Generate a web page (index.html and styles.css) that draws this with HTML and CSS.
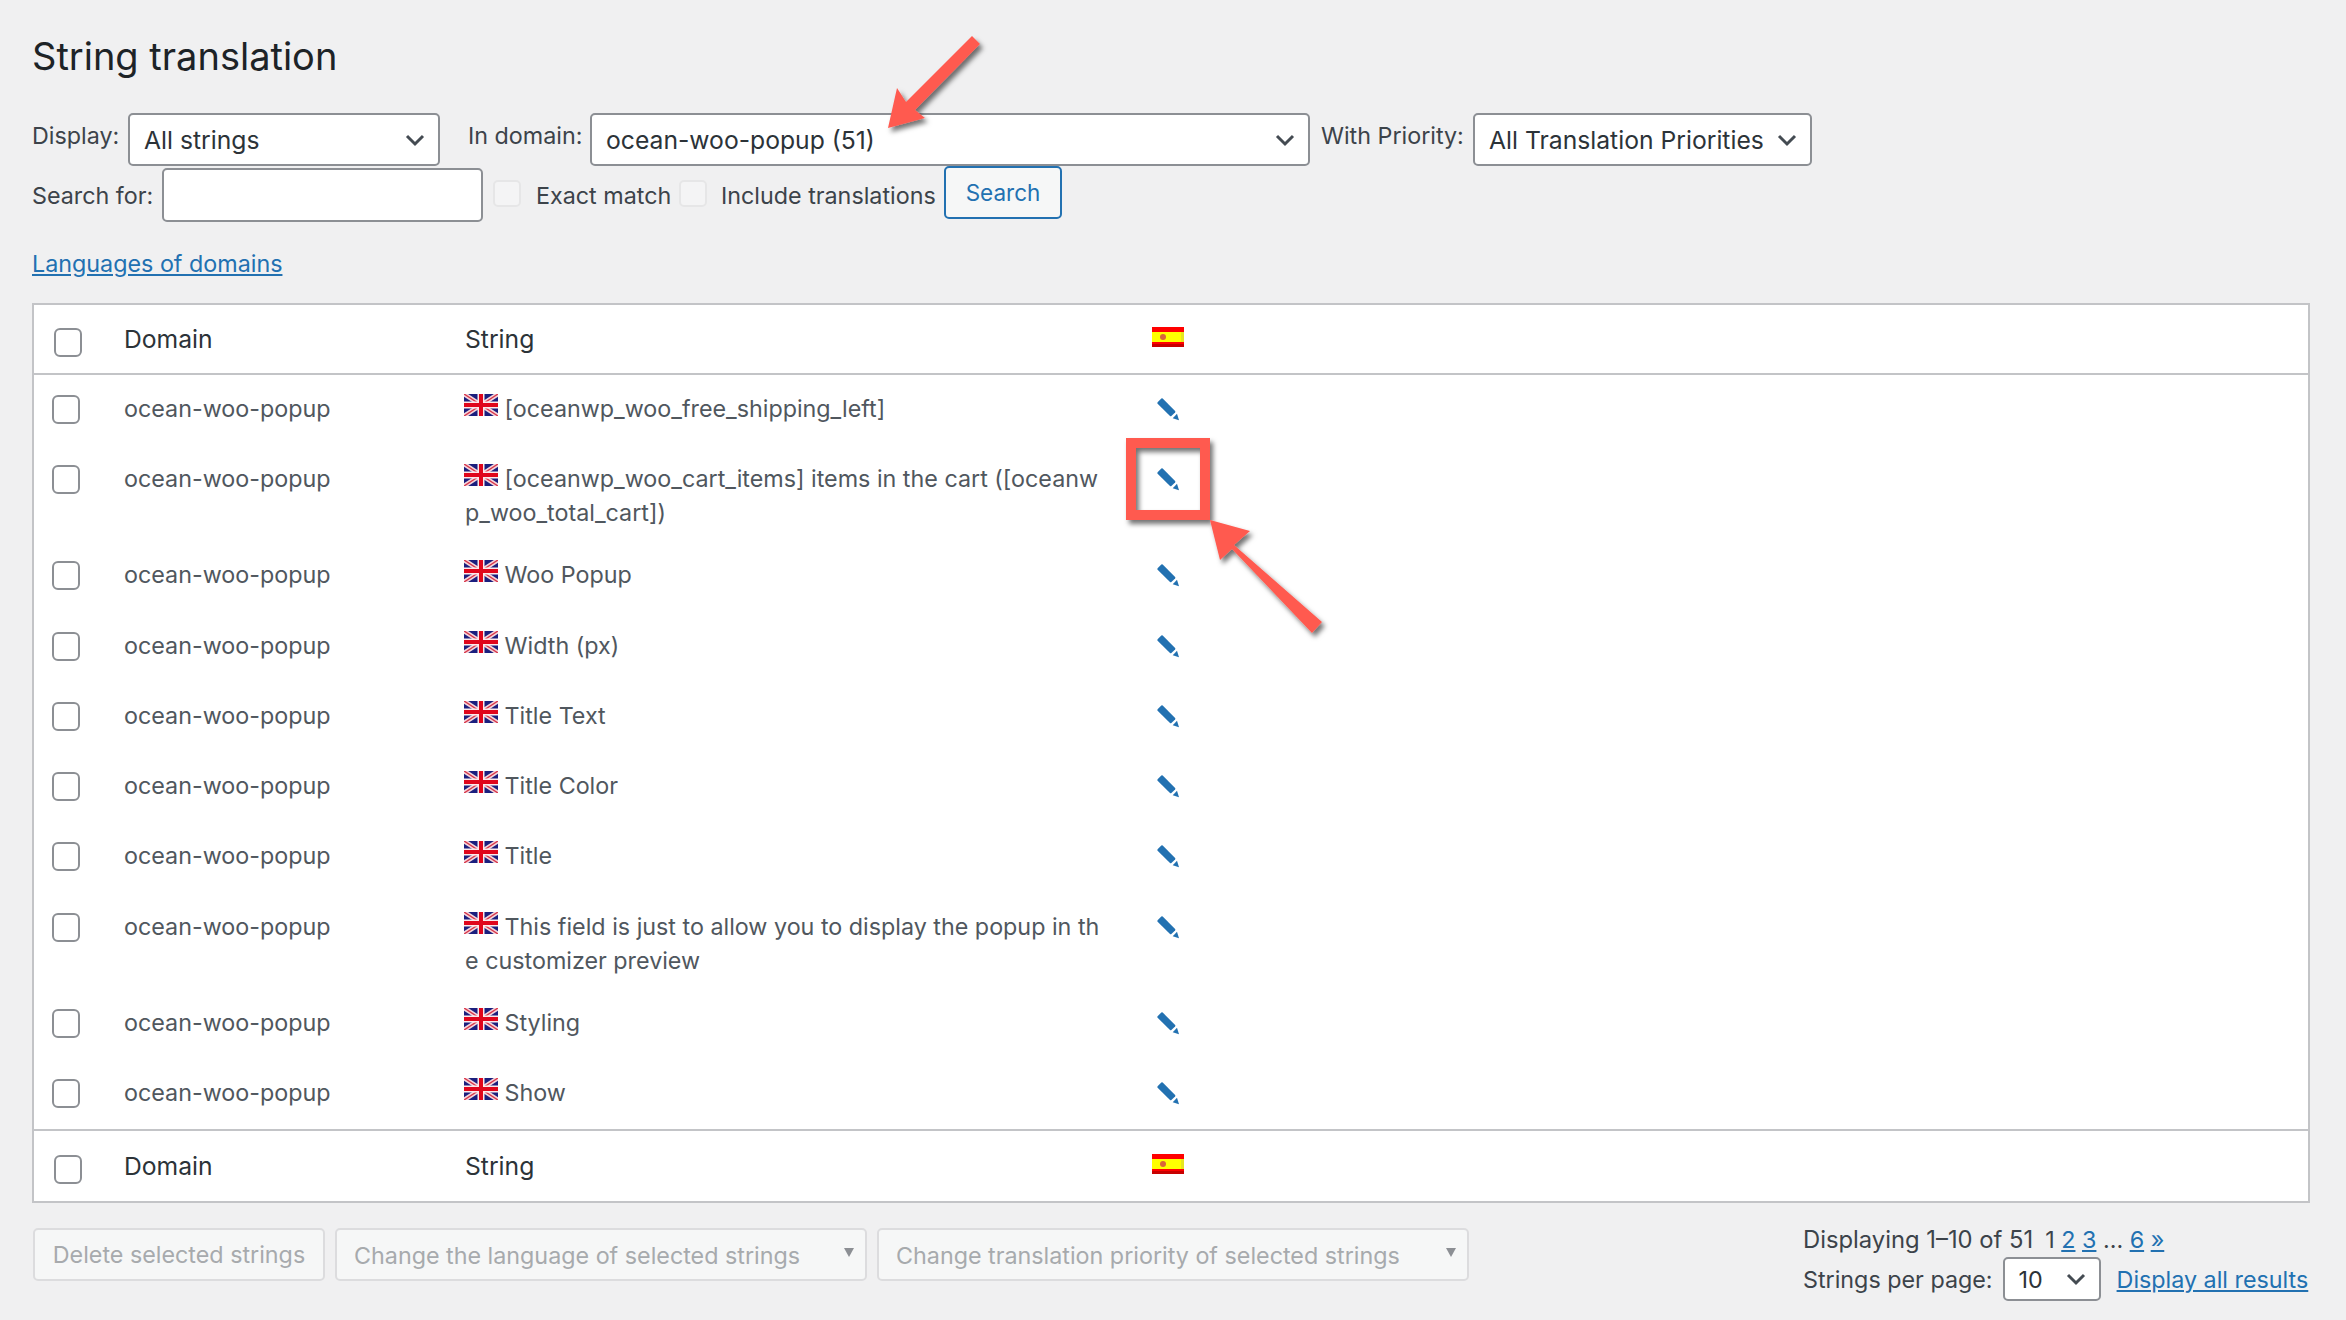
FILE: index.html
```html
<!DOCTYPE html>
<html lang="en">
<head>
    <meta charset="UTF-8">
    <meta name="viewport" content="width=device-width, initial-scale=1.0">
    <title>String translation</title>
    <link rel="stylesheet" href="styles.css">
</head>
<body>
    <svg class="defs" width="0" height="0">
        <symbol id="flag-gb" viewBox="0 0 34 22">
            <rect width="34" height="22" fill="#1b1f7e"/>
            <path d="M0 0L34 22M34 0L0 22" stroke="#f4d6dc" stroke-width="4.5"/>
            <path d="M0 0L34 22M34 0L0 22" stroke="#d8364a" stroke-width="1.4"/>
            <path d="M17 0V22M0 11H34" stroke="#fbe9ec" stroke-width="7"/>
            <path d="M17 0V22M0 11H34" stroke="#e0061c" stroke-width="4"/>
        </symbol>
        <symbol id="flag-es" viewBox="0 0 32 20">
            <rect width="32" height="20" fill="#f00"/>
            <rect y="5" width="32" height="10" fill="#ff0"/>
            <rect y="17" width="32" height="3" fill="#c80000"/>
            <rect x="29" y="5" width="3" height="10" fill="#e6e620"/>
            <circle cx="11" cy="10" r="3" fill="#d9653a"/>
        </symbol>
        <symbol id="pencil" viewBox="0 0 22 23">
            <path d="M4.3 0.6L0.6 4.3Q0 5 0.6 5.7L13 18.1Q13.7 18.6 14.4 18.1L18.1 14.4Q18.7 13.7 18.1 13L5.7 0.6Q5 0 4.3 0.6Z" fill="#2271b1"/>
            <path d="M20 15.7L22 22.3L15.7 20.3Z" fill="#2271b1"/>
        </symbol>
    </svg>

    <div id="main-container">
        <h1 class="page-title">String translation</h1>

        <form class="filters">
            <div class="filter-row">
                <label class="filter-label label-display">Display:</label>
                <select class="wp-select select-display"><option>All strings</option></select>
                <label class="filter-label label-domain">In domain:</label>
                <select class="wp-select select-domain"><option>ocean-woo-popup (51)</option></select>
                <label class="filter-label label-priority">With Priority:</label>
                <select class="wp-select select-priority"><option>All Translation Priorities</option></select>
            </div>
            <div class="filter-row search-row">
                <label class="filter-label label-search">Search for:</label>
                <input class="search-input" type="text">
                <span class="faint-check check-exact"></span>
                <label class="filter-label label-exact">Exact match</label>
                <span class="faint-check check-include"></span>
                <label class="filter-label label-include">Include translations</label>
                <button class="search-button" type="button">Search</button>
            </div>
        </form>

        <a class="wp-link domains-link" href="#">Languages of domains</a>

        <table class="strings-table">
            <colgroup>
                <col class="col-check"><col class="col-domain"><col class="col-string"><col>
            </colgroup>
            <thead>
                <tr>
                    <th class="check-cell"><input class="wp-check head-check" type="checkbox"></th>
                    <th>Domain</th>
                    <th>String</th>
                    <th class="flag-head"><svg class="flag-es"><use href="#flag-es"/></svg></th>
                </tr>
            </thead>
            <tbody>
                <tr>
                    <td class="check-cell"><input class="wp-check" type="checkbox"></td>
                    <td>ocean-woo-popup</td>
                    <td class="string-cell"><svg class="flag-gb"><use href="#flag-gb"/></svg> [oceanwp_woo_free_shipping_left]</td>
                    <td class="edit-cell"><svg class="pencil"><use href="#pencil"/></svg></td>
                </tr>
                <tr>
                    <td class="check-cell"><input class="wp-check" type="checkbox"></td>
                    <td>ocean-woo-popup</td>
                    <td class="string-cell"><svg class="flag-gb"><use href="#flag-gb"/></svg> [oceanwp_woo_cart_items] items in the cart ([oceanwp_woo_total_cart])</td>
                    <td class="edit-cell"><svg class="pencil"><use href="#pencil"/></svg></td>
                </tr>
                <tr>
                    <td class="check-cell"><input class="wp-check" type="checkbox"></td>
                    <td>ocean-woo-popup</td>
                    <td class="string-cell"><svg class="flag-gb"><use href="#flag-gb"/></svg> Woo Popup</td>
                    <td class="edit-cell"><svg class="pencil"><use href="#pencil"/></svg></td>
                </tr>
                <tr>
                    <td class="check-cell"><input class="wp-check" type="checkbox"></td>
                    <td>ocean-woo-popup</td>
                    <td class="string-cell"><svg class="flag-gb"><use href="#flag-gb"/></svg> Width (px)</td>
                    <td class="edit-cell"><svg class="pencil"><use href="#pencil"/></svg></td>
                </tr>
                <tr>
                    <td class="check-cell"><input class="wp-check" type="checkbox"></td>
                    <td>ocean-woo-popup</td>
                    <td class="string-cell"><svg class="flag-gb"><use href="#flag-gb"/></svg> Title Text</td>
                    <td class="edit-cell"><svg class="pencil"><use href="#pencil"/></svg></td>
                </tr>
                <tr>
                    <td class="check-cell"><input class="wp-check" type="checkbox"></td>
                    <td>ocean-woo-popup</td>
                    <td class="string-cell"><svg class="flag-gb"><use href="#flag-gb"/></svg> Title Color</td>
                    <td class="edit-cell"><svg class="pencil"><use href="#pencil"/></svg></td>
                </tr>
                <tr>
                    <td class="check-cell"><input class="wp-check" type="checkbox"></td>
                    <td>ocean-woo-popup</td>
                    <td class="string-cell"><svg class="flag-gb"><use href="#flag-gb"/></svg> Title</td>
                    <td class="edit-cell"><svg class="pencil"><use href="#pencil"/></svg></td>
                </tr>
                <tr>
                    <td class="check-cell"><input class="wp-check" type="checkbox"></td>
                    <td>ocean-woo-popup</td>
                    <td class="string-cell"><svg class="flag-gb"><use href="#flag-gb"/></svg> This field is just to allow you to display the popup in the customizer preview</td>
                    <td class="edit-cell"><svg class="pencil"><use href="#pencil"/></svg></td>
                </tr>
                <tr>
                    <td class="check-cell"><input class="wp-check" type="checkbox"></td>
                    <td>ocean-woo-popup</td>
                    <td class="string-cell"><svg class="flag-gb"><use href="#flag-gb"/></svg> Styling</td>
                    <td class="edit-cell"><svg class="pencil"><use href="#pencil"/></svg></td>
                </tr>
                <tr class="last-row">
                    <td class="check-cell"><input class="wp-check" type="checkbox"></td>
                    <td>ocean-woo-popup</td>
                    <td class="string-cell"><svg class="flag-gb"><use href="#flag-gb"/></svg> Show</td>
                    <td class="edit-cell"><svg class="pencil"><use href="#pencil"/></svg></td>
                </tr>
            </tbody>
            <tfoot>
                <tr>
                    <th class="check-cell"><input class="wp-check head-check" type="checkbox"></th>
                    <th>Domain</th>
                    <th>String</th>
                    <th class="flag-head"><svg class="flag-es"><use href="#flag-es"/></svg></th>
                </tr>
            </tfoot>
        </table>

        <div class="bottom-bar">
            <div class="bulk-actions">
                <button class="bulk-control bulk-delete" type="button" disabled>Delete selected strings</button>
                <div class="bulk-control bulk-language">Change the language of selected strings</div>
                <div class="bulk-control bulk-priority">Change translation priority of selected strings</div>
            </div>
            <div class="pager">
                <div class="pager-line">
                    <span class="pager-count">Displaying 1–10 of 51</span>
                    <span class="pager-pages">1 <a class="wp-link" href="#">2</a> <a class="wp-link" href="#">3</a> ... <a class="wp-link" href="#">6</a> <a class="wp-link" href="#">»</a></span>
                </div>
                <div class="pager-line per-page">
                    <label>Strings per page:</label>
                    <select class="wp-select select-perpage"><option>10</option></select>
                    <a class="wp-link" href="#">Display all results</a>
                </div>
            </div>
        </div>
    </div>

    <!-- annotations drawn over the screenshot -->
    <svg class="annotations" width="2346" height="1320" viewBox="0 0 2346 1320">
        <defs>
            <filter id="arrow-shadow" x="-20%" y="-20%" width="140%" height="140%">
                <feDropShadow dx="3" dy="4" stdDeviation="2.5" flood-color="#000" flood-opacity="0.55"/>
            </filter>
        </defs>
        <g filter="url(#arrow-shadow)" fill="#ff5a50">
            <path d="M1126 438H1210V520H1126ZM1136 448V510H1200V448Z" fill-rule="evenodd"/>
            <path d="M1210 520L1250 531L1234 545L1322 622L1312 633L1232 549L1220 560Z"/>
            <path d="M888 128L897 88L906 102L972 36L980 44L915 110L925 118Z"/>
        </g>
    </svg>
</body>
</html>
```

FILE: styles.css
```css
/* page */
* {
    box-sizing: border-box;
}
html, body {
    margin: 0;
    height: 100%;
    overflow: hidden;
}
body {
    background: #f0f0f1;
    color: #3c434a;
    font-family: Inter, "Liberation Sans", sans-serif;
    font-size: 23.3px;
    position: relative;
}
.defs {
    position: absolute;
}
#main-container {
    padding: 32px 36px 0 32px;
}
.page-title {
    margin: 0;
    height: 81px;
    font-size: 38px;
    line-height: 48px;
    font-weight: 400;
    color: #1d2327;
}

/* filters */
.filter-row {
    display: flex;
    align-items: flex-start;
    height: 53px;
}
.search-row {
    height: 60px;
}
.filter-label {
    line-height: 46px;
    white-space: nowrap;
}
.wp-select {
    appearance: none;
    -webkit-appearance: none;
    height: 53px;
    padding: 0 44px 0 14px;
    border: 2px solid #8c8f94;
    border-radius: 5px;
    color: #2c3338;
    font: inherit;
    font-size: 24.7px;
    background: #fff url("data:image/svg+xml,%3Csvg xmlns='http://www.w3.org/2000/svg' width='20' height='14' viewBox='0 0 20 14'%3E%3Cpath d='M2 3l8 8 8-8' fill='none' stroke='%23444b52' stroke-width='3'/%3E%3C/svg%3E") no-repeat right 13px center;
}
.label-display { width: 96px; }
.select-display { width: 312px; }
.label-domain { width: 122px; margin-left: 28px; }
.select-domain { width: 720px; }
.label-priority { width: 152px; margin-left: 11px; }
.select-priority { width: 339px; }
.label-search { width: 130px; margin-top: 7px; }
.search-input {
    width: 321px;
    height: 54px;
    margin-top: 2px;
    border: 2px solid #8c8f94;
    border-radius: 5px;
    background: #fff;
}
.faint-check {
    width: 28px;
    height: 27px;
    margin-top: 14px;
    border: 2px solid #e6e6e7;
    border-radius: 5px;
    background: #f4f4f5;
}
.check-exact { margin-left: 10px; }
.label-exact { width: 143px; margin: 7px 0 0 15px; }
.label-include { width: 223px; margin: 7px 0 0 14px; }
.search-button {
    width: 118px;
    height: 53px;
    border: 2px solid #2271b1;
    border-radius: 5px;
    background: #f6f7f7;
    color: #2271b1;
    font: inherit;
    font-size: 22.5px;
}
.wp-link {
    color: #2271b1;
    text-decoration: underline;
}
.domains-link {
    display: block;
    line-height: 34px;
    margin-top: 21px;
    margin-bottom: 22px;
    width: fit-content;
}

/* table */
.strings-table {
    width: 2278px;
    table-layout: fixed;
    border-collapse: separate;
    border-spacing: 0;
    border: 2px solid #c3c4c7;
    background: #fff;
}
.col-check { width: 90px; }
.col-domain { width: 341px; }
.col-string { width: 675px; }
.strings-table th {
    height: 70px;
    padding: 0;
    font-weight: 400;
    font-size: 24.7px;
    text-align: left;
    color: #2c3338;
}
.strings-table thead th {
    border-bottom: 2px solid #c3c4c7;
}
.strings-table tfoot th {
    border-top: 2px solid #c3c4c7;
    height: 72px;
}
.strings-table td {
    height: 70.3px;
    padding: 17px 0 11px;
    vertical-align: top;
    line-height: 34px;
    color: #50575e;
}
.strings-table td.check-cell {
    padding-top: 6px;
    padding-left: 18px;
}
.strings-table th.check-cell {
    padding-left: 20px;
}
.wp-check {
    appearance: none;
    -webkit-appearance: none;
    display: block;
    width: 28px;
    height: 29px;
    margin: 14px 0 0;
    border: 2px solid #8c8f94;
    border-radius: 6px;
    background: #fff;
}
.head-check {
    margin-top: 6px;
}
.string-cell {
    padding-right: 32px !important;
    word-break: break-all;
}
.flag-gb {
    width: 34px;
    height: 22px;
    margin-left: -1px;
    vertical-align: 1px;
}
.flag-es {
    display: block;
    width: 32px;
    height: 20px;
    margin-bottom: 4px;
}
.flag-head {
    padding-left: 12px !important;
}
.strings-table td.edit-cell {
    padding-left: 17px;
    padding-top: 23px;
}
.pencil {
    display: block;
    width: 22px;
    height: 23px;
}

/* bottom bar */
.bottom-bar {
    display: flex;
    justify-content: space-between;
    padding-top: 25px;
}
.bulk-actions {
    display: flex;
    gap: 10px;
    align-items: flex-start;
}
.bulk-control {
    height: 53px;
    line-height: 51px;
    padding: 0 17px;
    border: 2px solid #dcdcde;
    border-radius: 5px;
    background: #f6f7f7;
    color: #a7aaad;
    font: inherit;
    font-size: 23.3px;
}
.bulk-delete { width: 292px; margin-left: 1px; text-align: center; padding: 0; }
.bulk-language, .bulk-priority { line-height: 51px; position: relative; }
.bulk-language { width: 532px; }
.bulk-priority { width: 592px; }
.bulk-language::after, .bulk-priority::after {
    content: "";
    position: absolute;
    right: 11px;
    top: 18px;
    border-left: 5px solid transparent;
    border-right: 5px solid transparent;
    border-top: 9px solid #8c8f94;
}
.pager {
    width: 507px;
    margin-top: -6px;
}
.pager-line {
    display: flex;
    align-items: center;
    height: 34px;
    white-space: pre;
}
.pager-count {
    margin-right: 12px;
    font-size: 23.8px;
}
.per-page {
    height: 44px;
    margin-top: 1px;
}
.select-perpage {
    width: 98px;
    height: 44px;
    margin-left: 10px;
    margin-right: 16px;
    padding-left: 14px;
    font-size: 23.3px;
}
.annotations {
    position: absolute;
    left: 0;
    top: 0;
    pointer-events: none;
}
```
